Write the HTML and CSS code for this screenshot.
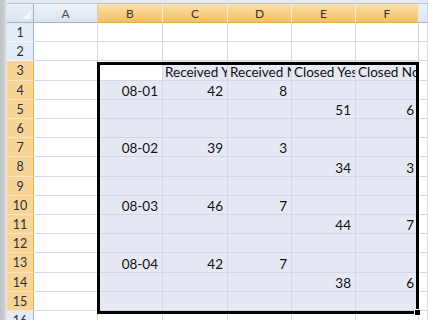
FILE: index.html
```
<!DOCTYPE html>
<html lang="en">
<head>
  <meta charset="UTF-8" />
  <title>Sheet1</title>
  <link rel="stylesheet" href="styles.css">
</head>
<body>
  <div class="sheet">
    <div class="edge"></div>
    <div class="main">
      <div class="topbar"></div>

      <!-- column headers -->
      <div class="row head">
        <div class="corner"></div>
        <div class="ch">A</div>
        <div class="ch on">B</div>
        <div class="ch on">C</div>
        <div class="ch on">D</div>
        <div class="ch on">E</div>
        <div class="ch on">F</div>
        <div class="ch"></div>
      </div>

      <div class="row">
        <div class="rh">1</div>
        <div class="c"></div><div class="c"></div><div class="c"></div><div class="c"></div><div class="c"></div><div class="c"></div><div class="c"></div>
      </div>
      <div class="row">
        <div class="rh">2</div>
        <div class="c"></div><div class="c"></div><div class="c"></div><div class="c"></div><div class="c"></div><div class="c"></div><div class="c"></div>
      </div>
      <div class="row tall">
        <div class="rh on">3</div>
        <div class="c"></div>
        <div class="c act"></div>
        <div class="c in txt">Received Y</div>
        <div class="c in txt">Received N</div>
        <div class="c in txt">Closed Yes</div>
        <div class="c in txt">Closed No</div>
        <div class="c"></div>
      </div>
      <div class="row">
        <div class="rh on">4</div>
        <div class="c"></div>
        <div class="c in">08-01</div><div class="c in">42</div><div class="c in">8</div><div class="c in"></div><div class="c in"></div>
        <div class="c"></div>
      </div>
      <div class="row">
        <div class="rh on">5</div>
        <div class="c"></div>
        <div class="c in"></div><div class="c in"></div><div class="c in"></div><div class="c in">51</div><div class="c in">6</div>
        <div class="c"></div>
      </div>
      <div class="row">
        <div class="rh on">6</div>
        <div class="c"></div>
        <div class="c in"></div><div class="c in"></div><div class="c in"></div><div class="c in"></div><div class="c in"></div>
        <div class="c"></div>
      </div>
      <div class="row">
        <div class="rh on">7</div>
        <div class="c"></div>
        <div class="c in">08-02</div><div class="c in">39</div><div class="c in">3</div><div class="c in"></div><div class="c in"></div>
        <div class="c"></div>
      </div>
      <div class="row tall">
        <div class="rh on">8</div>
        <div class="c"></div>
        <div class="c in"></div><div class="c in"></div><div class="c in"></div><div class="c in">34</div><div class="c in">3</div>
        <div class="c"></div>
      </div>
      <div class="row">
        <div class="rh on">9</div>
        <div class="c"></div>
        <div class="c in"></div><div class="c in"></div><div class="c in"></div><div class="c in"></div><div class="c in"></div>
        <div class="c"></div>
      </div>
      <div class="row">
        <div class="rh on">10</div>
        <div class="c"></div>
        <div class="c in">08-03</div><div class="c in">46</div><div class="c in">7</div><div class="c in"></div><div class="c in"></div>
        <div class="c"></div>
      </div>
      <div class="row">
        <div class="rh on">11</div>
        <div class="c"></div>
        <div class="c in"></div><div class="c in"></div><div class="c in"></div><div class="c in">44</div><div class="c in">7</div>
        <div class="c"></div>
      </div>
      <div class="row">
        <div class="rh on">12</div>
        <div class="c"></div>
        <div class="c in"></div><div class="c in"></div><div class="c in"></div><div class="c in"></div><div class="c in"></div>
        <div class="c"></div>
      </div>
      <div class="row tall">
        <div class="rh on">13</div>
        <div class="c"></div>
        <div class="c in">08-04</div><div class="c in">42</div><div class="c in">7</div><div class="c in"></div><div class="c in"></div>
        <div class="c"></div>
      </div>
      <div class="row">
        <div class="rh on">14</div>
        <div class="c"></div>
        <div class="c in"></div><div class="c in"></div><div class="c in"></div><div class="c in">38</div><div class="c in">6</div>
        <div class="c"></div>
      </div>
      <div class="row">
        <div class="rh on">15</div>
        <div class="c"></div>
        <div class="c in"></div><div class="c in"></div><div class="c in"></div><div class="c in"></div><div class="c in"></div>
        <div class="c"></div>
      </div>
      <div class="row">
        <div class="rh">16</div>
        <div class="c"></div><div class="c"></div><div class="c"></div><div class="c"></div><div class="c"></div><div class="c"></div><div class="c"></div>
      </div>
    </div>

    <!-- selected range B3:F15 -->
    <div class="selection"><span class="handle"></span></div>
  </div>
</body>
</html>
```

FILE: styles.css
```
* { box-sizing: border-box; }
body {
  margin: 0;
  background: #fff;
  font-family: Lato, 'Liberation Sans', sans-serif;
  color: #222;
  overflow: hidden;
}
.sheet {
  position: relative;
  display: flex;
  width: 428px;
  height: 320px;
  overflow: hidden;
}
.edge {
  width: 7px;
  flex: none;
  background: linear-gradient(to right, #bfc3c8, #c9ccd0 60%, #e9ecef);
}
.main {
  flex: 1;
  min-width: 0;
}
.topbar {
  height: 4px;
  background: #e6ebf1;
  border-bottom: 1px solid #b9c3ce;
}

/* rows and cells */
.row {
  display: flex;
  height: 19px;
}
.row.tall { height: 20px; }
.row.head { height: 19px; }
.row > div {
  flex: none;
  border-right: 1px solid #d4d9e3;
  border-bottom: 1px solid #d4d9e3;
}
.row > :nth-child(1) { width: 27px; }
.row > :nth-child(2) { width: 64px; }
.row > :nth-child(3) { width: 65px; }
.row > :nth-child(4) { width: 65px; }
.row > :nth-child(5) { width: 64px; }
.row > :nth-child(6) { width: 64px; }
.row > :nth-child(7) { width: 63px; }
.row > :nth-child(8) { flex: 1; }

.c {
  display: flex;
  align-items: flex-end;
  justify-content: flex-end;
  padding: 0 4px 0 2px;
  font-size: 13.5px;
  line-height: 16px;
  white-space: nowrap;
  overflow: hidden;
  color: #111;
}
.c.in {
  background: #e6e9f4;
  border-color: #d4d8e6;
}
.c.act { background: #fff; }
.c.txt { justify-content: flex-start; padding-left: 2px; }

/* headers */
.corner {
  position: relative;
  background: linear-gradient(#e9eff7, #d9e3ef);
  border-right-color: #9eb6ce !important;
  border-bottom-color: #9eb6ce !important;
}
.corner::after {
  content: "";
  position: absolute;
  right: 2px;
  bottom: 3px;
  border-left: 9px solid transparent;
  border-bottom: 9px solid #f3f6fa;
}
.ch {
  display: flex;
  align-items: center;
  justify-content: center;
  font-size: 12px;
  color: #4a4f57;
  background: linear-gradient(#eef3f9, #dbe4ef);
  border-right-color: #c7d3e0 !important;
  border-bottom-color: #9eb6ce !important;
}
.ch.on {
  color: #3a3526;
  background: linear-gradient(#fbe0ad, #f6cf85 55%, #f1c15f);
  border-right-color: #fde9c6 !important;
  border-bottom-color: #f2a93d !important;
}
.rh {
  display: flex;
  align-items: center;
  justify-content: center;
  font-size: 12.5px;
  color: #27303c;
  background: #e3ebf6;
  border-right-color: #9eb6ce !important;
  border-bottom-color: #f4f7fb !important;
}
.rh.on {
  background: #f8d496;
  border-right-color: #f2a93d !important;
  border-bottom-color: #fde5bd !important;
}

/* selection outline */
.selection {
  position: absolute;
  left: 97px;
  top: 62px;
  width: 322px;
  height: 252px;
  border: 3px solid #000;
}
.handle {
  position: absolute;
  right: -5px;
  bottom: -5px;
  width: 7px;
  height: 7px;
  background: #000;
  border: 1px solid #fff;
}
```
